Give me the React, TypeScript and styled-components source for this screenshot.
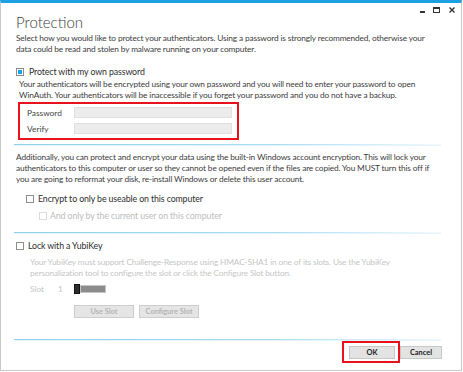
import styled, { createGlobalStyle } from 'styled-components'

const GlobalStyle = createGlobalStyle`
	html, body {
		margin: 0;
		padding: 0;
		background: #fff;
	}
	body {
		font-family: Lato, 'Open Sans', sans-serif;
		color: #3c3c3c;
	}
`

export default function App() {
	return (
		<>
			<GlobalStyle />
			<Window>
				<Header>
					<Title>Protection</Title>
					<Controls>
						<svg width='5' height='6' viewBox='0 0 5 6'>
							<rect x='0' y='4' width='5' height='2' fill='#333' />
						</svg>
						<svg width='7' height='6' viewBox='0 0 7 6'>
							<rect x='0.5' y='0.5' width='6' height='5' fill='none' stroke='#333' />
							<rect x='0' y='0' width='7' height='2' fill='#333' />
						</svg>
						<svg width='6' height='6' viewBox='0 0 6 6'>
							<path d='M0.5 0.5 L5.5 5.5 M5.5 0.5 L0.5 5.5' stroke='#333' strokeWidth='1.4' />
						</svg>
					</Controls>
				</Header>
				<Body>
					<Para $top={1}>
						Select how you would like to protect your authenticators. Using a password is strongly recommended, otherwise your
						<br />
						data could be read and stolen by malware running on your computer.
					</Para>

					<CheckRow $top={11} $gap={5}>
						<Box $checked />
						<Label>Protect with my own password</Label>
					</CheckRow>
					<Para $indent={3} $top={1}>
						Your authenticators will be encrypted using your own password and you will need to enter your password to open
						<br />
						WinAuth. Your authenticators will be inaccessible if you forget your password and you do not have a backup.
					</Para>
					<Highlight>
						<FieldRow>
							<FieldLabel>Password</FieldLabel>
							<Input />
						</FieldRow>
						<FieldRow>
							<FieldLabel>Verify</FieldLabel>
							<Input />
						</FieldRow>
					</Highlight>

					<Separator $top={4} />

					<Para $top={7}>
						Additionally, you can protect and encrypt your data using the built-in Windows account encryption. This will lock your
						<br />
						authenticators to this computer or user so they cannot be opened even if the files are copied. You MUST turn this off if
						<br />
						you are going to reformat your disk, re-install Windows or delete this user account.
					</Para>
					<CheckRow $top={8} $indent={10} $gap={4}>
						<Box />
						<Label>Encrypt to only be useable on this computer</Label>
					</CheckRow>
					<CheckRow $top={5} $indent={23} $gap={3}>
						<Box $disabled />
						<Label $disabled>And only by the current user on this computer</Label>
					</CheckRow>

					<Separator $top={10} />

					<CheckRow $top={7} $gap={4}>
						<Box />
						<Label>Lock with a YubiKey</Label>
					</CheckRow>
					<Para $indent={14} $top={5} $disabled>
						Your YubiKey must support Challenge-Response using HMAC-SHA1 in one of its slots. Use the YubiKey
						<br />
						personalization tool to configure the slot or click the Configure Slot button.
					</Para>
					<SlotRow>
						<SlotLabel>Slot</SlotLabel>
						<SlotValue>1</SlotValue>
						<Slider>
							<Thumb />
							<Track />
						</Slider>
					</SlotRow>
					<ButtonRow>
						<SmallButton>Use Slot</SmallButton>
						<SmallButton>Configure Slot</SmallButton>
					</ButtonRow>

					<Separator $top={21} />

					<Footer>
						<OkWrap>
							<DialogButton>OK</DialogButton>
						</OkWrap>
						<DialogButton>Cancel</DialogButton>
					</Footer>
				</Body>
			</Window>
		</>
	)
}

const Window = styled.div`
	width: 462px;
	height: 371px;
	box-sizing: border-box;
	border: 1px solid #c9c9c9;
	border-top: 3px solid #1ba1e2;
	display: flex;
	flex-direction: column;
	overflow: hidden;
`

const Header = styled.div`
	display: flex;
	justify-content: space-between;
	align-items: flex-start;
	padding: 0 6px 0 15px;
	height: 29px;
`

const Title = styled.h1`
	margin: 9px 0 0;
	font-size: 15px;
	font-weight: 300;
	color: #3a3a3a;
	line-height: 20px;
	white-space: nowrap;
`

const Controls = styled.div`
	display: flex;
	align-items: flex-start;
	margin-top: 4px;
	gap: 9px;

	svg {
		display: block;
	}
	svg:first-child {
		margin-right: -1px;
	}
`

const Body = styled.div`
	display: flex;
	flex-direction: column;
	padding: 0 20px 0 15px;
	flex: 1;
`

const Para = styled.p<{ $indent?: number; $top?: number; $disabled?: boolean }>`
	margin: ${p => p.$top ?? 0}px 0 0 ${p => p.$indent ?? 0}px;
	font-size: 8.3px;
	line-height: 11px;
	letter-spacing: -0.14px;
	white-space: nowrap;
	color: ${p => (p.$disabled ? '#c6c6c6' : '#3c3c3c')};
`

const CheckRow = styled.label<{ $top?: number; $indent?: number; $gap?: number }>`
	display: flex;
	align-items: center;
	height: 12px;
	gap: ${p => p.$gap ?? 5}px;
	margin: ${p => p.$top ?? 0}px 0 0 ${p => p.$indent ?? 0}px;
`

const Box = styled.span<{ $checked?: boolean; $disabled?: boolean }>`
	width: 8px;
	height: 8px;
	box-sizing: border-box;
	border: 1px solid ${p => (p.$disabled ? '#dadada' : '#8e8e8e')};
	background: ${p => (p.$checked ? '#1ba1e2' : '#fff')};
	box-shadow: ${p => (p.$checked ? 'inset 0 0 0 1px #fff' : 'none')};
	flex: none;
`

const Label = styled.span<{ $disabled?: boolean }>`
	font-size: 8.8px;
	line-height: 12px;
	letter-spacing: -0.12px;
	white-space: nowrap;
	color: ${p => (p.$disabled ? '#bdbdbd' : '#2e2e2e')};
`

const Highlight = styled.div`
	margin: 1px 0 0 2px;
	width: 221px;
	height: 38px;
	box-sizing: border-box;
	border: 2px solid #e8121c;
	padding: 3px 5px 0 7px;
	display: flex;
	flex-direction: column;
	gap: 5px;
`

const FieldRow = styled.div`
	display: flex;
	align-items: center;
	height: 11px;
`

const FieldLabel = styled.span`
	width: 47px;
	font-size: 8.3px;
	color: #444;
`

const Input = styled.div`
	flex: 1;
	height: 11px;
	box-sizing: border-box;
	background: #ececec;
	border: 1px solid #e0e0e0;
`

const Separator = styled.div<{ $top?: number }>`
	margin: ${p => p.$top ?? 0}px 0 0 -2px;
	height: 1px;
	background: linear-gradient(to right, #8ed2ee 0%, #a6dcf1 60%, #f2fafd 100%);
	box-shadow: 0 1px 0 #e6f5fb;
`

const SlotRow = styled.div`
	display: flex;
	align-items: center;
	height: 10px;
	margin: 5px 0 0 14px;
	color: #c6c6c6;
	font-size: 8.3px;
`

const SlotLabel = styled.span`
	width: 28px;
`

const SlotValue = styled.span`
	width: 16px;
`

const Slider = styled.div`
	display: flex;
	align-items: center;
`

const Thumb = styled.span`
	width: 4px;
	height: 8px;
	background: #2c2c2c;
	border: 1px solid #111;
`

const Track = styled.span`
	width: 24px;
	height: 6px;
	background: #8c8c8c;
	border: 1px solid #c4c4c4;
`

const ButtonRow = styled.div`
	display: flex;
	gap: 5px;
	margin: 11px 0 0 58px;
`

const SmallButton = styled.button`
	width: 60px;
	height: 13px;
	padding: 0;
	font-family: inherit;
	font-size: 7.4px;
	font-weight: 700;
	color: #b4b4b4;
	background: #e5e5e5;
	border: 1px solid #cdcdcd;
`

const Footer = styled.div`
	display: flex;
	justify-content: flex-end;
	align-items: center;
	margin: 1px -1px 0 0;
`

const OkWrap = styled.div`
	display: flex;
	border: 2px solid #e8121c;
	padding: 3px 3px 2px 5px;
`

const DialogButton = styled.button`
	width: 46px;
	height: 13px;
	padding: 0;
	font-family: inherit;
	font-size: 7.4px;
	font-weight: 700;
	color: #222;
	background: #e3e3e3;
	border: 1px solid #c8c8c8;

	${OkWrap} + & {
		width: 42px;
	}
`
